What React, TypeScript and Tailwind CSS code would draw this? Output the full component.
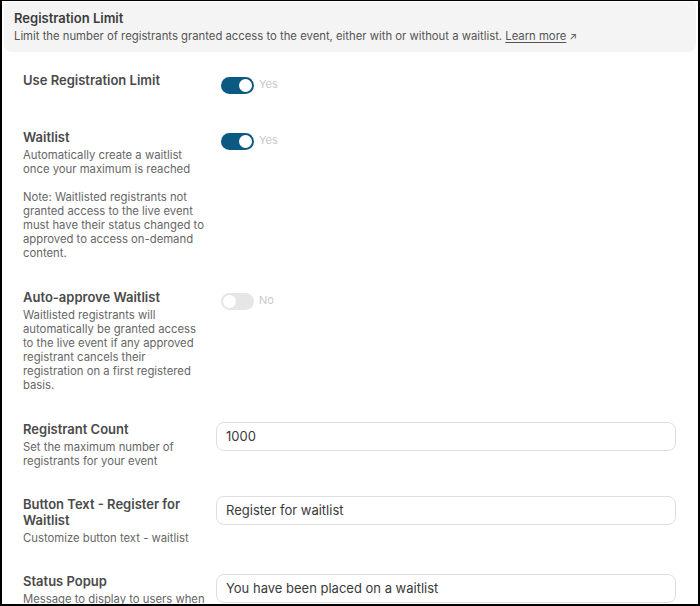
import React from "react";

const font = { fontFamily: "Inter, 'Noto Sans', sans-serif" };

function Toggle({ on, text }: { on: boolean; text: string }) {
  return (
    <div className="ml-[5px] flex items-center gap-[5px]">
      <div
        className={
          on
            ? "relative h-[17px] w-[33px] rounded-full bg-[#0c5a82]"
            : "relative h-[17px] w-[33px] rounded-full bg-[#e6e6e6]"
        }
      >
        <div
          className={
            on
              ? "absolute right-[2px] top-[2px] h-[13px] w-[13px] rounded-full bg-white"
              : "absolute left-[2px] top-[2px] h-[13px] w-[13px] rounded-full bg-white"
          }
        />
      </div>
      <span className="-mt-[2px] text-[11px] leading-none text-[#c9c9c9]">{text}</span>
    </div>
  );
}

function Label({ title, children }: { title: string; children?: React.ReactNode }) {
  return (
    <div className="w-[186px] shrink-0">
      <div className="text-[13px] font-semibold leading-4 text-[#4a4a4a]">{title}</div>
      {children && (
        <div className="mt-[3px] text-[11.3px] leading-[14px] text-[#666666]">{children}</div>
      )}
    </div>
  );
}

function Input({ value }: { value: string }) {
  return (
    <div className="flex h-[29px] flex-1 items-center rounded-[8px] border border-[#dedede] bg-white px-[9px] text-[13px] text-[#3a3a3a]">
      {value}
    </div>
  );
}

export default function App() {
  return (
    <div
      style={font}
      className="h-[606px] w-[700px] overflow-hidden border-b-2 border-l-2 border-r-2 border-t border-black bg-white"
    >
      <div className="mx-[2px] mt-[1px] rounded-b-[8px] rounded-t-[4px] bg-[#f4f4f4] px-[10px] pb-[8px] pt-[6px]">
        <div className="text-[13px] font-semibold leading-5 text-[#3c3c3c]">Registration Limit</div>
        <div className="text-[11.3px] leading-4 text-[#555555]">
          Limit the number of registrants granted access to the event, either with or without a waitlist.{" "}
          <span className="underline underline-offset-2">Learn more</span>
          <span className="ml-[3px] text-[10px]">↗</span>
        </div>
      </div>

      <div className="pl-[21px] pr-[22px]">
        <div className="mt-[20px] flex gap-[7px]">
          <Label title="Use Registration Limit" />
          <div className="mt-[5px]">
            <Toggle on text="Yes" />
          </div>
        </div>

        <div className="mt-[35px] flex gap-[7px]">
          <Label title="Waitlist">
            <div>Automatically create a waitlist once your maximum is reached</div>
            <div className="mt-[14px]">
              Note: Waitlisted registrants not granted access to the live event must have their status changed to
              approved to access on-demand content.
            </div>
          </Label>
          <div className="mt-[4px]">
            <Toggle on text="Yes" />
          </div>
        </div>

        <div className="mt-[29px] flex gap-[7px]">
          <Label title="Auto-approve Waitlist">
            Waitlisted registrants will automatically be granted access to the live event if any approved registrant
            cancels their registration on a first registered basis.
          </Label>
          <div className="mt-[4px]">
            <Toggle on={false} text="No" />
          </div>
        </div>

        <div className="mt-[29px] flex gap-[7px]">
          <Label title="Registrant Count">Set the maximum number of registrants for your event</Label>
          <div className="mt-[1px] flex flex-1">
            <Input value="1000" />
          </div>
        </div>

        <div className="mt-[28px] flex gap-[7px]">
          <Label title="Button Text - Register for Waitlist">Customize button text - waitlist</Label>
          <div className="flex flex-1">
            <Input value="Register for waitlist" />
          </div>
        </div>

        <div className="mt-[28px] flex gap-[7px]">
          <Label title="Status Popup">Message to display to users when placed on the waitlist</Label>
          <div className="mt-[1px] flex flex-1">
            <Input value="You have been placed on a waitlist" />
          </div>
        </div>
      </div>
    </div>
  );
}
